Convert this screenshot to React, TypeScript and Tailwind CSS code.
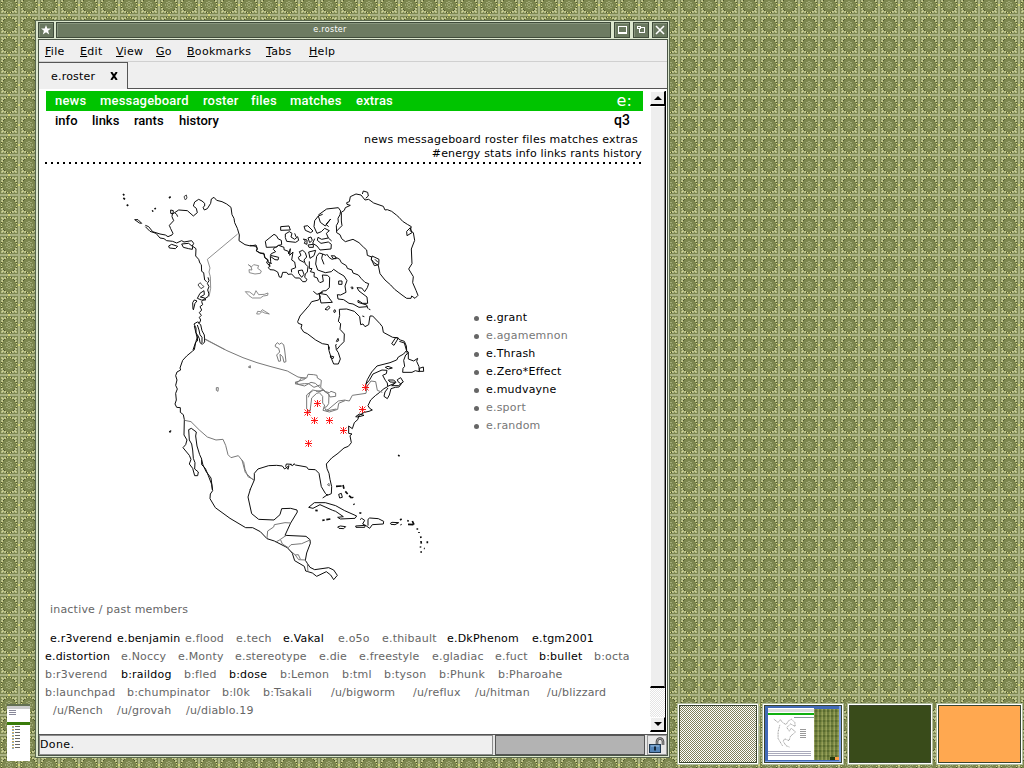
import React from 'react';

const INK = '#0c0c0c';
const SOFT = '#777';

function Wallpaper() {
  return (
    <svg className="absolute inset-0 h-full w-full" shapeRendering="crispEdges" aria-hidden="true">
      <defs>
        <g id="corner">
          <path d="M3 3h6v1H8v1H7v1H6v1H5v1H4v1H3z" fill="#b3bb88" />
          <path d="M8 3h1v1H8zM6 5h1v1H6zM5 6h1v1H5zM3 8h1v1H3z" fill="#4a5229" />
          <path d="M5 3h1v1H5zM3 5h1v1H3z" fill="#7d8752" />
          <path d="M7 4h1v1H7zM4 7h1v1H4zM4 4h1v1H4zM9 3h1v1H9zM3 9h1v1H3z" fill="#d6d78a" />
        </g>
        <pattern id="tile" x="18" y="14" width="20" height="20" patternUnits="userSpaceOnUse">
          <rect width="20" height="20" fill="#7c864f" />
          <path d="M0 0h20v2H0zM0 0h2v20H0z" fill="#a9b183" />
          <path d="M10 0h2v2h-2zM0 10h2v2H0z" fill="#d6d77c" />
          <use href="#corner" />
          <use href="#corner" transform="translate(22 0) scale(-1 1)" />
          <use href="#corner" transform="translate(0 22) scale(1 -1)" />
          <use href="#corner" transform="translate(22 22) scale(-1 -1)" />
          <path d="M10 7h2v1h-2zM8 8h2v1H8zM12 8h2v1h-2zM7 10h1v2H7zM14 10h1v2h-1zM8 13h2v1H8zM12 13h2v1h-2zM10 14h2v1h-2zM10 9h2v1h-2zM9 10h1v2H9zM12 10h1v2h-1zM10 12h2v1h-2z" fill="#a0a976" />
        </pattern>
      </defs>
      <rect width="100%" height="100%" fill="url(#tile)" />
    </svg>
  );
}

function NorthAmerica() {
  return (
    <svg className="block h-[410px] w-[330px] shrink-0" viewBox="110 180 330 410" fill="none" strokeWidth="3" strokeLinejoin="round" stroke={INK}>
      {/* Alaska and the Pacific north-west */}
      <g transform="translate(110 180) scale(.33333)">
        <path d="M106 136L116 140L128 155L150 162L166 165L174 170L186 165L189 160L182 146L178 136L191 122L186 110L187 102L194 98L200 103L203 110M182 90L190 92L189 101L182 100zM194 98L206 90L232 92L250 108L262 98L259 85L250 78L254 66L266 58L276 63L284 70L284 78L279 82L283 90L292 86L302 70L304 57L312 52L320 61L336 65L350 72L363 82L366 104L372 115L374 128L382 145L388 165L387 182L405 194L422 198L438 195L442 205L439 212L450 219L462 220L465 233L474 239L475 248L486 250" />
        <path d="M106 140L120 154L138 160L150 174L162 176L170 182L188 184L200 189L215 182L222 186L245 182L251 190L247 198L258 206L257 228L266 238L270 250L274 254L275 274L281 278L284 300L290 305M215 192L220 202L236 206L247 208L248 200L236 190zM176 198L185 193L203 199L196 206L178 204zM74 119L84 119L95 130L88 129zM262 355L270 340L282 332L283 344L271 351L284 354L287 360L274 360zM249 388L248 368L253 360L261 363L255 370L250 390M294 292L297 302L292 310L297 320L293 330L297 342L294 350L283 357L275 365L278 374L270 380L275 390L268 398L274 406L268 412L272 420L269 428L262 426L252 432L258 444L258 458L268 475L270 488L277 493L284 486L283 465L276 452L272 434L264 428M262 435L267 450L270 464L276 472L276 489M262 472L258 484L249 510M253 438L262 476" />
        <path d="M222 50L229 45L231 54L226 60zM264 315L270 308L277 315L282 320L273 326z" stroke="#444" />
        <path strokeWidth="5" d="M39 42L43 46M40 54L45 58M50 74L55 77M126 94L130 92M134 84L137 88M177 54L182 50" />
        <path stroke={SOFT} strokeWidth="2.5" d="M383 162L292 238L300 264L297 276L301 290L302 325L297 350M284 476L345 509M415 254L424 261L431 254L446 257L443 265L454 273L451 280L435 282L418 278L417 269L426 270L423 260zM406 335L419 336L432 346L438 332L446 344L463 343L474 339L473 346L460 348L451 354L427 354L417 347zM440 402L443 394L452 395L457 389L478 402L464 399L456 395L448 402z" />
      </g>
      {/* Arctic archipelago, Greenland and Hudson Bay */}
      <g transform="translate(250 180) scale(.33333)">
        <path d="M0 196L17 199L22 207L19 213L30 219L42 222L44 233L53 240L50 249L61 258L55 263L60 269L72 270L83 276L88 291L94 292L98 277L110 277L114 283L125 282L136 294L149 294L158 305L167 305L171 298L164 292L166 282L172 276L174 260L166 252L162 240L170 231L166 218L158 211L148 215L153 226L145 232L148 240L162 247M46 184L72 163L79 167L85 177L94 181L95 194L86 196L79 201L49 202zM74 202L70 208L77 215L64 221L61 226L86 232L84 240L75 239L61 229L62 244L57 259M76 203L86 196L102 202L102 209L115 214L116 222L121 206L119 226L129 216L125 240L134 246L137 263L124 268L125 277M92 140L117 138L121 150L92 151zM106 162L118 155L126 160L123 171L134 178L143 170L146 181L137 187L110 184L106 173zM134 160L139 172M162 139L173 137L189 153L182 158L166 151zM160 177L166 183L163 190L171 193L171 180zM174 174L183 171L187 181L179 188zM174 195L190 193L190 202L177 202zM176 216L197 211L192 227L180 235L178 225zM145 272L157 270L162 283L155 292L146 280z" />
        <path d="M205 105L230 87L265 83L272 93L270 104L264 115L265 126L259 137L260 158L270 164L275 176L286 185L309 178L327 188L340 201L350 210L352 226L365 231L364 238L372 248L385 256L390 281L405 300L422 315L434 328L456 345L470 355L483 355L485 348L495 355L504 346L498 331L488 308L490 290L476 267L486 251L484 207L494 181L490 158L480 152L484 140L472 133L458 124L447 112L439 105L425 94L412 89L405 90L400 79L371 69L356 58L345 60L333 45L318 42L301 50L298 65L290 68L291 73L301 76L286 83L283 91L274 97L274 123L276 137L260 153M337 42L340 33L353 37L355 48L347 55M470 154L481 143L486 158L471 167zM366 228L375 232L387 238L386 254L373 257L364 238zM375 238L384 247M218 103L205 108L194 122L192 140L201 160L214 155L224 145L238 152L229 160L235 174L215 178L204 172L202 181L213 190L235 186L244 193L243 207L210 210L201 198L188 190L194 176M205 108L211 127L226 138L242 117L228 133L236 140M235 174L245 183M208 219L200 229L197 252L203 270L226 278L244 275L251 268L265 278L282 288L291 302L285 318L288 337L272 345L262 344L264 357L281 359L297 370L309 372L327 382L351 380M208 219L218 222L215 235L222 253M218 222L228 226L231 223L237 232L246 238L260 233L269 238L274 248L289 257L292 265L306 270L309 279L325 285L334 296L345 307L356 311L352 323L344 335L335 324L321 323L327 333L351 351L353 370L338 370L324 361L324 367L350 375L354 386M244 227L255 228L259 236L250 236zM178 244L178 265L186 266L181 275L193 278L192 290L202 294L205 303L210 308L220 304L217 285L232 286L239 292L238 323L228 332L217 333L208 343L211 351L206 360L185 365L177 377L150 408L143 425L145 430L156 434L153 444L161 456L172 461L197 480L217 491L235 494L236 509M207 340L230 344L247 367L213 369zM190 334L201 343L219 336M225 388L236 378L240 383L232 390zM251 392L255 389L257 395L253 398zM266 303L276 303L276 313L266 313zM302 322L308 321L309 326L304 326M259 484L264 475L266 482L260 485zM260 509L271 496L282 485L283 462L270 448L272 431L265 424L269 406L268 388L290 387L313 394L329 410L332 434L339 432L345 440L356 434L360 408L368 408L389 430L397 440L400 457L428 472L441 473L451 480L463 484L469 498L470 510M425 491L437 473L445 474L432 496zM337 408L343 410M356 387L361 389" />
      </g>
      {/* West coast, southern border and Baja */}
      <g transform="translate(160 330) scale(.33333)">
        <path d="M114 17L112 33L107 37L103 59L98 63L80 78L68 91L60 114L62 120L51 126L47 137L51 150L47 166L52 177L47 190L49 210L45 222L50 232L61 233L61 247L70 254L73 269L72 315L81 330L77 344L69 353L88 376L93 388L88 402L98 415L104 437L113 437L115 426L104 417L105 398L100 385L98 360L95 342L88 330L86 299L94 295L109 306L107 318L111 348L119 374L125 387L125 404L136 415L145 437L155 463L157 480M270 480L283 450L283 430L294 417L326 407L350 406L367 408L374 417L387 407L384 418L377 409L379 402L395 403M27 305L33 302L31 307z" />
        <path stroke={SOFT} d="M135 28L201 62L249 83L291 98L333 110L382 123L414 141L438 145M437 145L431 149L405 157L417 163L433 161L446 161L462 172L480 165M74 271L93 275L118 300L142 321L168 330L189 328L197 346L204 374L213 383L235 377L251 397L255 418L264 440L283 450M169 173L175 173L174 184L169 181zM265 111L271 107L271 114zM346 45L352 38L358 43L364 39L371 44L374 60L378 95L372 97L368 80L360 73L362 93L356 94L350 75L359 66L356 55L346 50zM445 202L450 188L458 183" />
      </g>
      {/* Great Lakes and the Atlantic coast */}
      <g transform="translate(290 340) scale(.33333)">
        <path d="M118 20L117 32L124 55L131 72L145 72L151 57L145 38L139 29L137 15L140 12M121 48L131 50L129 56L122 53zM328 4L343 9L350 33L355 36L355 57L371 63L383 55L380 64L387 80L388 95L376 92L366 97L338 97L339 85L344 79L341 61L347 45L352 42L350 31L341 42L325 51L320 60L300 68L261 78L245 96L232 119L228 132L238 121L249 102L276 90L291 91L289 101L278 106L286 121L292 129L293 140L282 146L268 158L256 167L242 180L234 197L239 205L247 210L237 214L223 217L206 227L204 238L193 248L187 266L180 261L176 258L176 280L186 282L180 287L184 308L175 319L162 324L144 340L125 354L109 372L111 386L117 400L120 418L125 440L124 461L112 466L106 460L94 440L87 400L76 389L55 388L50 381L16 375L12 371L8 377L0 373M114 463L98 474M286 82L294 79L307 84L295 87zM293 139L316 129L305 137L325 137L335 130L327 141L316 142L303 146L298 165L292 176L282 169L285 156L294 144M322 119L332 113L340 126L332 131L324 125zM295 120L311 120L318 127L300 126zM388 85L400 81L401 94L388 94zM197 230L208 222L222 226L204 231zM146 463L154 460L157 472L149 474z" />
        <path strokeWidth="5" d="M324 346L329 348M138 439L155 438M159 435L162 446M166 454L173 462M177 467L185 474" />
        <path stroke={SOFT} d="M27 124L34 114L50 114L54 103L71 104L81 106L82 114L94 121L92 142L107 155L118 158L123 154L137 159L137 169L120 171L116 163L96 148L92 155L68 150L50 165L50 207L60 215L65 174L80 160L88 158L98 169L98 190L104 195L99 211L118 216L143 208L146 190L167 181L178 183L187 166L228 160L232 138L243 123L257 125L262 151L277 157M78 154L101 151L117 163L116 191L109 201L103 202L109 213L139 207M92 145L76 130L63 127L44 138L15 131L27 124M231 132L227 138L233 144M109 208L114 209L145 183L166 180M112 434L117 430L118 438z" />
      </g>
      {/* Mexico, Central America and the Caribbean */}
      <g transform="translate(200 460) scale(.33333)">
        <path d="M5 0L9 15L18 34L33 54L38 92L31 102L30 116L46 143L90 175L137 203L158 203L181 215L201 236L223 243L262 263L277 280L284 302L313 319L317 333L337 339L350 349L379 335L392 345L401 359L412 346L401 330L386 323L344 329L330 322L316 301L320 279L331 250L330 239L318 229L255 226L272 189L292 156L291 150L272 145L245 146L240 164L222 180L176 178L155 161L144 111L151 88M326 142L343 128L376 128L407 137L434 152L470 168L465 175L421 177L413 172L430 170L407 154L398 151L360 134L339 145zM480 179L485 175L494 181L488 192L498 197L509 205L517 194L550 192L551 184L535 176L509 174L504 178L504 197M413 201L421 198L437 200L431 206L417 205zM467 198L496 196L494 202L468 202zM571 190L576 187L596 188L585 194L573 193z" />
        <path strokeWidth="5" d="M367 181L374 180M379 179L391 177M346 151L353 152M478 158L484 160M457 111L459 114M461 131L463 134M600 180L605 177M602 193L604 195M622 181L626 184M624 193L640 194M637 183L642 194M652 205L652 209M657 216L657 219M662 229L663 234M663 243L664 251M662 259L661 263M661 276L666 276M682 244L682 250M672 265L674 266" />
        <path stroke={SOFT} d="M126 0L136 38L162 62M272 189L255 188L223 194L221 201L203 213L201 235M227 246L237 241L259 226M242 240L247 252L265 263L273 254L305 251L330 240M266 268L285 284L296 299L316 300M285 285L295 284L301 297M322 310L324 336" />
      </g>
      <g stroke="#ff1010" strokeWidth="1">
        {[[307.5, 412.5], [314.5, 420.5], [329.5, 420.5], [343.5, 430.5], [308.5, 443.5], [362.5, 409.5], [317.5, 403.5], [365.5, 387.5]].map(([x, y]) => (
          <g key={`${x}`}>
            <path d={`M${x} ${y - 3.5}v7M${x - 3.5} ${y}h7`} />
            <path strokeWidth="0.9" d={`M${x - 3} ${y - 3}l2 2M${x + 3} ${y - 3}l-2 2M${x - 3} ${y + 3}l2 -2M${x + 3} ${y + 3}l-2 -2`} />
          </g>
        ))}
      </g>
    </svg>
  );
}

function Items({ items, className }: { items: [string, string][]; className: string }) {
  return (
    <div className={`flex whitespace-pre ${className}`}>
      {items.map(([label, c]) => (
        <span key={label} className={`shrink-0 ${c}`}>{label}</span>
      ))}
    </div>
  );
}

const ROWS: { pad: string; items: [string, string][] }[] = [
  { pad: 'pl-[11px]', items: [['e.r3verend', 'w-[67px] text-black'], ['e.benjamin', 'w-[68px] text-black'], ['e.flood', 'w-[51px]'], ['e.tech', 'w-[47px]'], ['e.Vakal', 'w-[55px] text-black'], ['e.o5o', 'w-[44px]'], ['e.thibault', 'w-[65px]'], ['e.DkPhenom', 'w-[85px] text-black'], ['e.tgm2001', 'text-black']] },
  { pad: 'pl-[6px]', items: [['e.distortion', 'w-[76px] text-black'], ['e.Noccy', 'w-[57px]'], ['e.Monty', 'w-[57px]'], ['e.stereotype', 'w-[84px]'], ['e.die', 'w-[40px]'], ['e.freestyle', 'w-[73px]'], ['e.gladiac', 'w-[63px]'], ['e.fuct', 'w-[44px]'], ['b:bullet', 'w-[55px] text-black'], ['b:octa', '']] },
  { pad: 'pl-[6px]', items: [['b:r3verend', 'w-[76px]'], ['b:raildog', 'w-[63px] text-black'], ['b:fled', 'w-[45px]'], ['b:dose', 'w-[51px] text-black'], ['b:Lemon', 'w-[62px]'], ['b:tml', 'w-[42px]'], ['b:tyson', 'w-[55px]'], ['b:Phunk', 'w-[59px]'], ['b:Pharoahe', '']] },
  { pad: 'pl-[6px]', items: [['b:launchpad', 'w-[82px]'], ['b:chumpinator', 'w-[95px]'], ['b:l0k', 'w-[41px]'], ['b:Tsakali', 'w-[68px]'], ['/u/bigworm', 'w-[82px]'], ['/u/reflux', 'w-[62px]'], ['/u/hitman', 'w-[72px]'], ['/u/blizzard', '']] },
  { pad: 'pl-[14px]', items: [['/u/Rench', 'w-[64px]'], ['/u/grovah', 'w-[69px]'], ['/u/diablo.19', '']] },
];

const MEMBERS: [string, boolean][] = [
  ['e.grant', true], ['e.agamemnon', false], ['e.Thrash', true], ['e.Zero*Effect', true], ['e.mudvayne', true], ['e.sport', false], ['e.random', false],
];

const MENU: [string, string][] = [
  ['File', 'w-[35px]'], ['Edit', 'w-[36px]'], ['View', 'w-[40px]'], ['Go', 'w-[31px]'], ['Bookmarks', 'w-[79px]'], ['Tabs', 'w-[43px]'], ['Help', ''],
];

function TitleButton({ children }: { children: React.ReactNode }) {
  return (
    <div className="flex h-4 w-4 shrink-0 items-center justify-center border border-[#3f4b3a] bg-[#69785f] shadow-[inset_1px_1px_#87957d]">
      <svg width="12" height="12" viewBox="0 0 12 12" fill="none" stroke="#fff" shapeRendering="crispEdges">{children}</svg>
    </div>
  );
}

function TitleBar() {
  return (
    <div className="flex h-[17px] items-start gap-[3px] bg-[#dce7ce] pl-px">
      <TitleButton>
        <path d="M6 1l1.3 3.4H11L8.1 6.7 9.2 10.5 6 8.3 2.8 10.5 3.9 6.7 1 4.4h3.7z" fill="#fff" stroke="none" shapeRendering="auto" />
      </TitleButton>
      <div className="-ml-px flex h-4 w-[555px] items-center justify-center border border-[#3f4b3a] bg-[#6d7b62] font-['DejaVu_Sans'] text-[8px] tracking-[0.3px] text-white shadow-[inset_1px_1px_#87957d]">
        <span className="-mt-px pr-[7px]">e.roster</span>
      </div>
      <TitleButton><path d="M2 2.5h8v7H2zM2 8.5h8" /></TitleButton>
      <TitleButton><path d="M2 2.5h3v2H2zM4 4v5M3.500 8.500h6v-5h-4" /></TitleButton>
      <TitleButton><path d="M2 2l8 8M10 2l-8 8" strokeWidth="1.6" shapeRendering="auto" /></TitleButton>
    </div>
  );
}

function ScrollButton({ down = false }: { down?: boolean }) {
  return (
    <div className="flex h-[15px] w-[15px] shrink-0 items-center justify-center border-r border-b-2 border-l border-t border-r-black border-b-black border-l-white border-t-white bg-[#eee]">
      <svg width="8" height="4" viewBox="0 0 8 4">{down ? <path d="M0 0h8L4 4z" /> : <path d="M0 4h8L4 0z" />}</svg>
    </div>
  );
}

function Browser() {
  return (
    <div className="ml-[35px] mt-[20px] flex h-[738px] w-[635px] flex-col border border-[#59674f] bg-[#dce7ce] p-px font-['DejaVu_Sans'] text-[11px]">
      <TitleBar />
      <div className="ml-px flex min-h-0 flex-1 flex-col border border-[#4a5546] bg-[#efefef] text-black">
        <Items className="h-[22px] shrink-0 items-center border-b border-[#d0d0d0] pl-[6px] pt-[4px] tracking-[0.3px] [&>span]:first-letter:underline" items={MENU} />
        <div className="flex h-[27px] shrink-0">
          <div className="flex w-[89px] items-center border-r border-t border-[#555] pl-[12px] pt-[2px]">
            <span className="w-[59px] tracking-[0.2px]">e.roster</span>
            <svg className="-mt-[2px]" width="8" height="8" viewBox="0 0 8 8" stroke="#000" strokeWidth="2"><path d="M1.2 0l5.6 8M6.8 0L1.2 8" /></svg>
          </div>
          <div className="flex-1 border-b border-[#555]" />
        </div>
        <div className="flex min-h-0 flex-1 bg-white">
          <div className="flex w-[611px] flex-col">
            <div className="ml-[7px] mt-[2px] flex h-[20px] w-[597px] shrink-0 items-center justify-between bg-[#00c400] pl-[9px] pr-[11px] font-[Roboto] text-[13px] font-medium tracking-[0.18px] text-white">
              <Items className="" items={[['news', 'w-[45px]'], ['messageboard', 'w-[103px]'], ['roster', 'w-[48px]'], ['files', 'w-[39px]'], ['matches', 'w-[66px]'], ['extras', '']]} />
              <span className="font-['DejaVu_Sans'] text-[16px] font-normal">e:</span>
            </div>
            <div className="ml-[7px] flex h-[20px] w-[597px] shrink-0 items-center justify-between pl-[9px] pr-[13px] font-[Roboto] text-[13px] font-medium">
              <Items className="" items={[['info', 'w-[37px]'], ['links', 'w-[42px]'], ['rants', 'w-[45px]'], ['history', '']]} />
              <span className="-mt-[3px] text-[14px] leading-[14px]">q3</span>
            </div>
            <div className="mt-[2px] pr-[12px] text-right leading-[14px] tracking-[0.23px]">news messageboard roster files matches extras</div>
            <div className="pr-[8px] text-right leading-[14px] tracking-[0.17px]">#energy stats info links rants history</div>
            <div className="ml-[6px] mt-px h-[2px] w-[598px] shrink-0 bg-[repeating-linear-gradient(90deg,#000_0_2px,transparent_2px_6px)]" />
            <div className="mt-[16px] flex h-[410px] pl-[71px]">
              <NorthAmerica />
              <ul className="ml-[34px] mt-[129px] tracking-[0.2px]">
                {MEMBERS.map(([name, active]) => (
                  <li key={name} className="flex h-[18px] items-center gap-[7px]">
                    <span className="h-[5px] w-[5px] rounded-full bg-[#666]" />
                    <span className={active ? 'text-black' : 'text-[#777]'}>{name}</span>
                  </li>
                ))}
              </ul>
            </div>
            <div className="mt-[11px] pl-[11px] leading-[18px] tracking-[0.2px] text-[#666]">inactive / past members</div>
            <div className="mt-[11px] tracking-[0.2px] text-[#666]">
              {ROWS.map((row, i) => (
                <Items key={i} className={`h-[18px] items-center ${row.pad}`} items={row.items} />
              ))}
            </div>
          </div>
          <div className="my-[2px] flex w-[16px] shrink-0 flex-col border-r border-black bg-[repeating-conic-gradient(#fff_0_25%,#e4e4e4_0_50%)] bg-[length:2px_2px]">
            <ScrollButton />
            <div className="h-[582px] w-[15px] border-b-2 border-l border-r border-t border-b-black border-l-white border-r-[#888] border-t-white bg-[#eee]" />
            <div className="flex-1" />
            <ScrollButton down />
          </div>
        </div>
        <div className="flex h-[21px] shrink-0 gap-[2px] border-t border-[#555] bg-[#e6e6e6]">
          <div className="flex w-[454px] items-center border border-[#8c8c8c] bg-[#efefef] tracking-[0.4px]">Done.</div>
          <div className="w-[150px] border border-[#555] bg-[#b3b3b3]" />
          <div className="flex flex-1 items-center justify-center border border-[#999]">
            <svg width="16" height="17" viewBox="0 0 16 17">
              <path d="M8 8V4.5a3 3 0 0 1 6 0V8" fill="none" stroke="#444" strokeWidth="2.6" />
              <path d="M8 8V4.5a3 3 0 0 1 6 0V8" fill="none" stroke="#aaa" />
              <rect x=".5" y="7.5" width="11" height="8" fill="#5686b8" stroke="#20384f" />
              <path d="M2 9h8" stroke="#9bc0e2" />
              <path d="M6 9.5v4" stroke="#13273a" strokeWidth="2" />
            </svg>
          </div>
        </div>
      </div>
    </div>
  );
}

function MiniDesktop() {
  return (
    <div className="flex h-full w-full bg-[#4169b8] p-[2px] pl-[3px] shadow-[inset_-2px_-1px_#7da0e8]">
      <div className="flex w-[46px] flex-col bg-white pt-[1px]">
        <div className="h-[3px] bg-[#ddd]" />
        <div className="mt-px h-[2px] bg-[#10b010]" />
        <div className="mt-[2px] h-px w-[20px] self-end bg-[#899]" />
        <div className="flex items-center">
          <svg className="ml-[5px]" width="24" height="30" viewBox="110 180 330 410" fill="none" stroke="#777" strokeWidth="10" strokeDasharray="14 8">
            <path d="M122 195L180 240L210 200L240 240L290 270L320 220L365 195L410 240L415 295L350 260L300 310L335 360L360 320L420 370L350 430L330 490L270 465L250 500L290 560L335 578M240 560L180 460L180 370L205 270" />
          </svg>
          <div className="ml-[3px] h-[9px] w-[6px] bg-[repeating-linear-gradient(#999_0_1px,transparent_1px_2px)]" />
        </div>
        <div className="mt-[3px] h-[5px] w-[43px] bg-[repeating-linear-gradient(#aab_0_1px,transparent_1px_2px)]" />
      </div>
      <div className="relative mt-px flex-1 overflow-hidden bg-[#7d8844]">
        <div className="h-full w-full bg-[repeating-linear-gradient(90deg,#9aa35e99_0_1px,#56682c99_1px_3px,#7f8c4499_3px_4px),repeating-linear-gradient(#99a35a_0_1px,#5f7034_1px_3px,#8a9550_3px_5px)]" />
        <div className="absolute bottom-0 right-0 h-[3px] w-[9px] bg-linear-to-r from-[#263b0d] from-60% to-[#ff9f45] to-60%" />
      </div>
    </div>
  );
}

function Frame({ children, className }: { children?: React.ReactNode; className: string }) {
  return (
    <div className={`absolute top-[703px] h-[62px] border border-[#b2be9d] bg-white p-px ${className}`}>
      <div className="h-full w-full border border-[#39442f]">{children}</div>
    </div>
  );
}

export default function App() {
  return (
    <div className="relative h-[768px] w-[1024px] overflow-hidden">
      <Wallpaper />
      <div className="relative flex"><Browser /></div>
      <div className="absolute left-[7px] top-[704px] flex h-[57px] w-[23px] flex-col bg-white">
        <div className="h-[2px] bg-[#637052]" />
        <div className="h-[3px] bg-[#ccc]" />
        <div className="ml-[2px] mt-px h-[6px] w-[7px] bg-[repeating-linear-gradient(#889_0_1px,transparent_1px_2px)]" />
        <div className="mt-[6px] h-[3px] bg-[#397b0a]" />
        <div className="ml-[5px] mt-px flex h-[24px] gap-px">
          <div className="w-[2px] bg-[repeating-linear-gradient(#c8ad60_0_1px,#8eabc4_1px_2px,#fff_2px_3px)]" />
          <div className="w-[5px] bg-[repeating-linear-gradient(#666_0_1px,#fff_1px_3px)]" />
        </div>
      </div>
      <Frame className="left-[677px] w-[82px]">
        <div className="h-full w-full bg-[repeating-conic-gradient(#fff_0_25%,#80805a_0_50%)] bg-[length:2px_2px]" />
      </Frame>
      <Frame className="left-[762px] w-[82px]"><MiniDesktop /></Frame>
      <Frame className="left-[847px] w-[86px]"><div className="h-full bg-[#394b1a]" /></Frame>
      <Frame className="left-[936px] w-[87px]"><div className="h-full bg-[#ffa850]" /></Frame>
    </div>
  );
}
